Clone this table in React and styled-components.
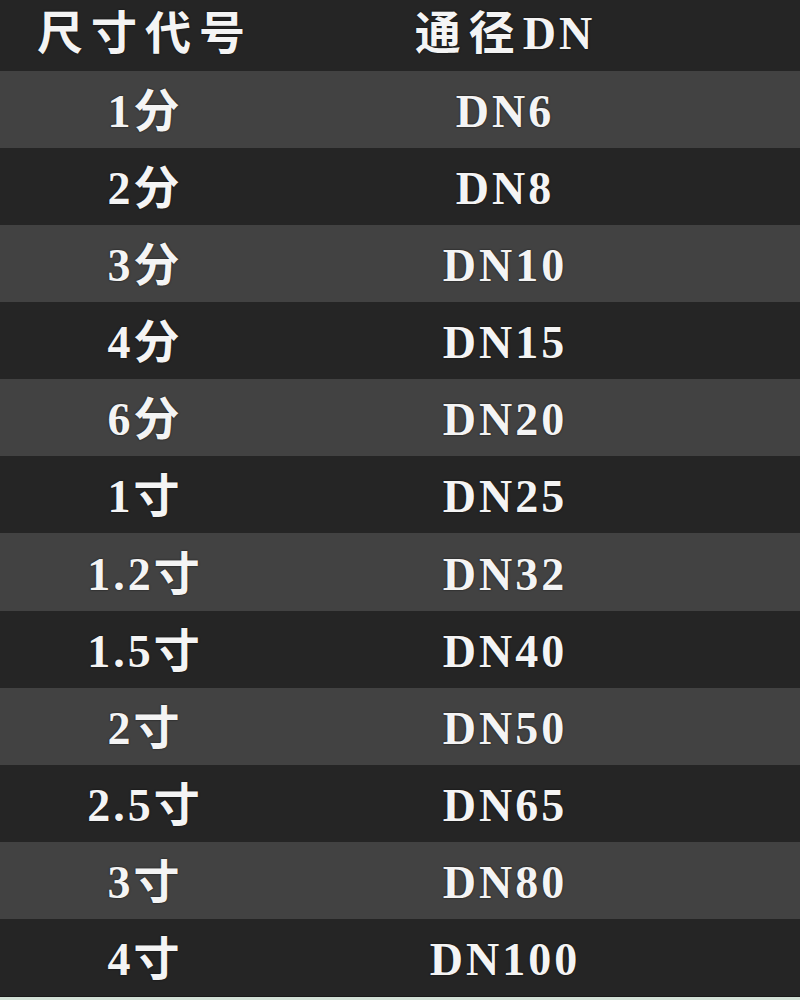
import React from "react";
import styled, { createGlobalStyle } from "styled-components";

const rows = [
  ["1分", "DN6"],
  ["2分", "DN8"],
  ["3分", "DN10"],
  ["4分", "DN15"],
  ["6分", "DN20"],
  ["1寸", "DN25"],
  ["1.2寸", "DN32"],
  ["1.5寸", "DN40"],
  ["2寸", "DN50"],
  ["2.5寸", "DN65"],
  ["3寸", "DN80"],
  ["4寸", "DN100"],
];

const GlobalStyle = createGlobalStyle`
  html, body {
    margin: 0;
    padding: 0;
    background: #d3e2d7;
  }
`;

const Table = styled.div`
  width: 800px;
  height: 996px;
  display: flex;
  flex-direction: column;
  background: #252525;
  border-bottom: 1px solid #1a1a1a;
  font-family: "Liberation Serif", "Noto Sans CJK SC", serif;
  font-weight: 700;
  color: #f4f4f4;
`;

const Row = styled.div`
  display: grid;
  grid-template-columns: 290px 430px 1fr;
  align-items: center;
  flex: ${({ $header }) => ($header ? "0 0 71px" : "1 1 0")};
  background: ${({ $light }) => ($light ? "#424242" : "#252525")};
`;

const Cell = styled.div`
  text-align: center;
  font-size: 46px;
  letter-spacing: 3px;
  line-height: 1;
  text-shadow: 0 0 2px rgba(0, 0, 0, 0.8);
  padding-top: ${({ $header }) => ($header ? "0" : "5px")};
  padding-bottom: ${({ $header }) => ($header ? "4px" : "0")};
`;

const Wide = styled.span`
  letter-spacing: 8px;
`;

export default function App() {
  return (
    <>
      <GlobalStyle />
      <Table>
        <Row $header>
          <Cell $header>
            <Wide>尺寸代号</Wide>
          </Cell>
          <Cell $header>
            <Wide>通径</Wide>DN
          </Cell>
        </Row>
        {rows.map(([size, dn], i) => (
          <Row key={dn} $light={i % 2 === 0}>
            <Cell>{size}</Cell>
            <Cell>{dn}</Cell>
          </Row>
        ))}
      </Table>
    </>
  );
}
